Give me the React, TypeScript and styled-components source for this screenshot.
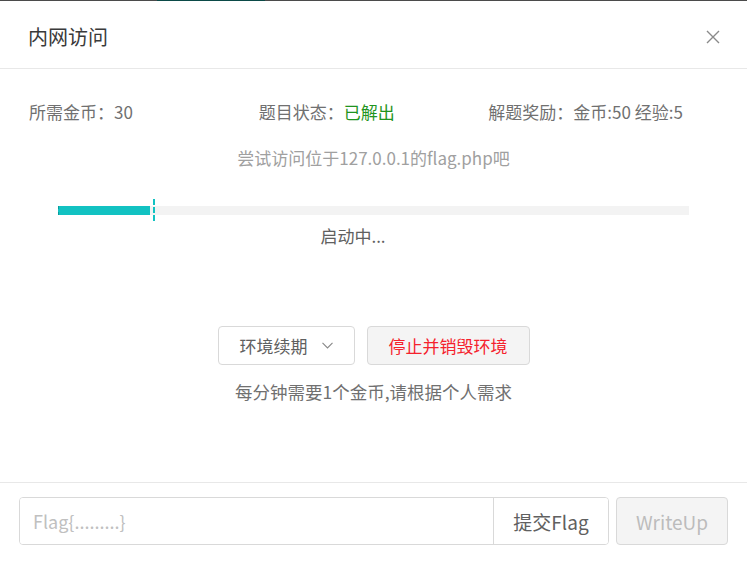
import styled, { createGlobalStyle } from "styled-components";

const GlobalStyle = createGlobalStyle`
  html, body {
    margin: 0;
    padding: 0;
    background: #fff;
  }
  body {
    font-family: "Noto Sans CJK SC", "Open Sans", sans-serif;
  }
  * {
    box-sizing: border-box;
  }
`;

const Modal = styled.div`
  width: 747px;
  height: 565px;
  display: flex;
  flex-direction: column;
  background: #fff;
  overflow: hidden;
`;

const TopEdge = styled.div`
  height: 1px;
  display: flex;
  background: #4b4b4b;
`;

const EdgeSegment = styled.div<{ $left: number; $width: number }>`
  margin-left: ${(p) => p.$left}px;
  width: ${(p) => p.$width}px;
  background: #0b4a47;
`;

const Header = styled.div`
  height: 68px;
  padding: 4px 26px 0 28px;
  display: flex;
  align-items: center;
  justify-content: space-between;
  border-bottom: 1px solid #e8e8e8;
`;

const Title = styled.h2`
  margin: 0;
  font-size: 20px;
  font-weight: 400;
  color: #3a3a3a;
`;

const CloseButton = styled.button`
  width: 16px;
  height: 16px;
  padding: 0;
  border: none;
  background: none;
  display: flex;
  align-items: center;
  justify-content: center;
  cursor: pointer;
`;

const Body = styled.div`
  flex: 1;
  padding: 31px 29px 0;
  display: flex;
  flex-direction: column;
  align-items: stretch;
`;

const InfoRow = styled.div`
  display: grid;
  grid-template-columns: 1fr 1fr 1fr;
  font-size: 17px;
  line-height: 24px;
  color: #707070;
`;

const Solved = styled.span`
  color: #1f9420;
`;

const Hint = styled.p`
  margin: 23px 0 0;
  text-align: center;
  font-size: 17px;
  line-height: 22px;
  color: #a0a0a0;
`;

const ProgressRow = styled.div`
  margin: 30px 29px 0;
  height: 22px;
  display: flex;
  align-items: center;
`;

const Track = styled.div`
  position: relative;
  flex: 1;
  height: 9px;
  background: #f3f3f3;
`;

const Fill = styled.div`
  height: 100%;
  background: #12c2c2;
  border-left: 1px dashed #0a9c9c;
`;

const Marker = styled.div`
  position: absolute;
  top: -7px;
  height: 22px;
  border-left: 2px dashed #12c2c2;
`;

const Status = styled.p`
  margin: 4px 0 0;
  padding-right: 41px;
  text-align: center;
  font-size: 17px;
  line-height: 22px;
  color: #606060;
`;

const Actions = styled.div`
  margin-top: 79px;
  display: flex;
  justify-content: center;
  gap: 12px;
`;

const ActionButton = styled.button<{ $danger?: boolean }>`
  height: 39px;
  padding: 0 21px;
  display: flex;
  align-items: center;
  gap: 14px;
  font-family: inherit;
  font-size: 17px;
  border: 1px solid #d9d9d9;
  border-radius: 4px;
  background: ${(p) => (p.$danger ? "#f4f4f4" : "#fff")};
  color: ${(p) => (p.$danger ? "#f5222d" : "#606060")};
  cursor: pointer;
`;

const Note = styled.p`
  margin: 16px 0 0;
  text-align: center;
  font-size: 17.5px;
  line-height: 22px;
  color: #707070;
`;

const Footer = styled.div`
  padding: 14px 19px 20px;
  border-top: 1px solid #e8e8e8;
  display: flex;
  gap: 7px;
`;

const InputGroup = styled.div`
  flex: 1;
  height: 48px;
  display: flex;
  border: 1px solid #d9d9d9;
  border-radius: 4px;
  overflow: hidden;
`;

const FlagInput = styled.input`
  flex: 1;
  min-width: 0;
  border: none;
  outline: none;
  padding: 0 13px;
  font-family: inherit;
  font-size: 18px;
  color: #333;

  &::placeholder {
    color: #c0c0c0;
  }
`;

const SubmitButton = styled.button`
  width: 115px;
  border: none;
  border-left: 1px solid #d9d9d9;
  background: #fff;
  font-family: inherit;
  font-size: 19px;
  color: #606060;
  cursor: pointer;
`;

const WriteUpButton = styled.button`
  width: 112px;
  height: 48px;
  border: 1px solid #d9d9d9;
  border-radius: 4px;
  background: #f4f4f4;
  font-family: inherit;
  font-size: 19px;
  color: #bcbcbc;
  cursor: not-allowed;
`;

export default function App() {
  const progress = 14.6;

  return (
    <>
      <GlobalStyle />
      <Modal>
        <TopEdge>
          <EdgeSegment $left={157} $width={108} />
        </TopEdge>
        <Header>
          <Title>内网访问</Title>
          <CloseButton aria-label="close">
            <svg width="14" height="14" viewBox="0 0 14 14">
              <path
                d="M1 1 L13 13 M13 1 L1 13"
                stroke="#8a8a8a"
                strokeWidth="1.4"
                fill="none"
              />
            </svg>
          </CloseButton>
        </Header>
        <Body>
          <InfoRow>
            <span>所需金币：30</span>
            <span>
              题目状态：<Solved>已解出</Solved>
            </span>
            <span>解题奖励：金币:50 经验:5</span>
          </InfoRow>
          <Hint>尝试访问位于127.0.0.1的flag.php吧</Hint>
          <ProgressRow>
            <Track>
              <Fill style={{ width: `${progress}%` }} />
              <Marker style={{ left: `calc(${progress}% + 3px)` }} />
            </Track>
          </ProgressRow>
          <Status>启动中...</Status>
          <Actions>
            <ActionButton>
              环境续期
              <svg width="11" height="7" viewBox="0 0 11 7">
                <path
                  d="M0.5 0.8 L5.5 6 L10.5 0.8"
                  stroke="#888"
                  strokeWidth="1.1"
                  fill="none"
                />
              </svg>
            </ActionButton>
            <ActionButton $danger>停止并销毁环境</ActionButton>
          </Actions>
          <Note>每分钟需要1个金币,请根据个人需求</Note>
        </Body>
        <Footer>
          <InputGroup>
            <FlagInput placeholder="Flag{.........}" />
            <SubmitButton>提交Flag</SubmitButton>
          </InputGroup>
          <WriteUpButton disabled>WriteUp</WriteUpButton>
        </Footer>
      </Modal>
    </>
  );
}
